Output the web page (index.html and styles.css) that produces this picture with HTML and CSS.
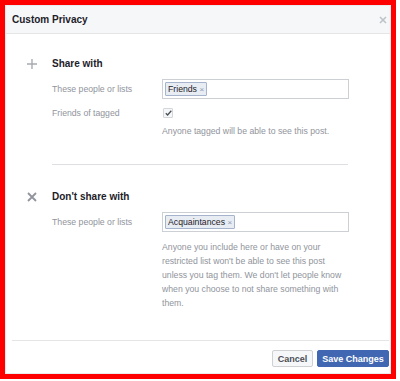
FILE: index.html
```html
<!DOCTYPE html>
<html lang="en">
<head>
    <meta charset="UTF-8">
    <meta name="viewport" content="width=device-width, initial-scale=1.0">
    <title>Custom Privacy</title>
    <link rel="stylesheet" href="styles.css">
</head>
<body>
    <div class="frame">
        <div class="dialog">
            <div class="dialog-header">
                <h1 class="dialog-title">Custom Privacy</h1>
                <svg class="dialog-close" width="8" height="8" viewBox="0 0 8 8">
                    <path d="M1 1 L7 7 M7 1 L1 7" stroke="#bec2c9" stroke-width="1.6" fill="none"/>
                </svg>
            </div>

            <div class="dialog-body">
                <div class="rule">
                    <div class="rule-head">
                        <svg class="rule-icon" width="10" height="10" viewBox="0 0 10 10">
                            <path d="M5 0 V10 M0 5 H10" stroke="#a7abb1" stroke-width="1.4" fill="none"/>
                        </svg>
                        <h2 class="rule-title">Share with</h2>
                    </div>
                    <div class="row">
                        <div class="row-label">These people or lists</div>
                        <div class="token-input">
                            <span class="token">Friends <span class="token-x">&times;</span></span>
                        </div>
                    </div>
                    <div class="row row-check">
                        <div class="row-label">Friends of tagged</div>
                        <span class="checkbox">
                            <svg width="7" height="6" viewBox="0 0 7 6">
                                <path d="M0.8 3.2 L2.6 5 L6.3 0.8" stroke="#4b4f56" stroke-width="1.3" fill="none"/>
                            </svg>
                        </span>
                    </div>
                    <p class="note">Anyone tagged will be able to see this post.</p>
                </div>

                <div class="divider"></div>

                <div class="rule rule-deny">
                    <div class="rule-head">
                        <svg class="rule-icon" width="10" height="10" viewBox="0 0 10 10">
                            <path d="M1 1 L9 9 M9 1 L1 9" stroke="#90949c" stroke-width="1.8" fill="none"/>
                        </svg>
                        <h2 class="rule-title">Don't share with</h2>
                    </div>
                    <div class="row">
                        <div class="row-label">These people or lists</div>
                        <div class="token-input">
                            <span class="token">Acquaintances <span class="token-x">&times;</span></span>
                        </div>
                    </div>
                    <p class="note note-long">Anyone you include here or have on your restricted list won't be able to see this post unless you tag them. We don't let people know when you choose to not share something with them.</p>
                </div>
            </div>

            <div class="dialog-footer">
                <button class="btn btn-cancel">Cancel</button>
                <button class="btn btn-save">Save Changes</button>
            </div>
        </div>
    </div>
</body>
</html>
```

FILE: styles.css
```css
* {
    margin: 0;
    padding: 0;
    box-sizing: border-box;
}

body {
    font-family: "Liberation Sans", Arial, sans-serif;
    background: #fff;
    color: #1d2129;
}

.frame {
    width: 396px;
    height: 379px;
    border: 5px solid #ff0000;
}

.dialog {
    display: flex;
    flex-direction: column;
    height: 100%;
    border: 1px solid #e9ebee;
    background: #fff;
}

.dialog-header {
    display: flex;
    justify-content: space-between;
    align-items: center;
    height: 28px;
    padding: 0 3px 0 6px;
    background: #f6f7f9;
    border-bottom: 1px solid #e5e5e5;
}

.dialog-title {
    font-size: 10px;
    font-weight: bold;
    color: #1d2129;
    line-height: 27px;
}

.dialog-close {
    display: block;
}

.dialog-body {
    flex: 1;
    padding-top: 23px;
}

.rule {
    padding-left: 21px;
}

.rule-head {
    display: flex;
    align-items: center;
    height: 14px;
}

.rule-icon {
    display: block;
    width: 10px;
    height: 10px;
    margin-right: 15px;
    flex: none;
}

.rule-title {
    font-size: 10px;
    font-weight: bold;
    color: #1d2129;
    line-height: 14px;
}

.row {
    display: flex;
    align-items: center;
    margin-top: 8px;
    padding-left: 25px;
}

.row-label {
    width: 110px;
    font-size: 8.7px;
    color: #90949c;
}

.token-input {
    display: flex;
    align-items: center;
    width: 187px;
    height: 20px;
    padding: 0 2px;
    border: 1px solid #ccd0d5;
    background: #fff;
}

.token {
    display: inline-flex;
    align-items: center;
    height: 14px;
    padding: 0 2px;
    border: 1px solid #a5b3cc;
    border-radius: 1px;
    background: #e8ecf3;
    font-size: 8.7px;
    color: #1d2129;
    white-space: pre;
}

.token-x {
    color: #8d9aaf;
    font-size: 8px;
}

.row-check {
    margin-top: 7px;
    height: 14px;
}

.checkbox {
    display: flex;
    align-items: center;
    justify-content: center;
    width: 10px;
    height: 10px;
    margin-left: 1px;
    border: 1px solid #d3d6db;
    border-radius: 1px;
    background: #f6f7f9;
}

.checkbox svg {
    display: block;
}

.note {
    margin-top: 4px;
    padding-left: 135px;
    font-size: 8.7px;
    line-height: 14px;
    color: #90949c;
}

.note-long {
    width: 322px;
    margin-top: 8px;
}

.divider {
    height: 1px;
    width: 296px;
    margin: 26px 0 0 46px;
    background: #dddfe2;
}

.rule-deny {
    margin-top: 25px;
}

.dialog-footer {
    display: flex;
    justify-content: flex-end;
    gap: 4px;
    margin: 0 1px 0 6px;
    padding: 9px 0 6px;
    border-top: 1px solid #e5e5e5;
}

.btn {
    height: 17px;
    padding: 0;
    border: 1px solid #ced0d4;
    border-radius: 2px;
    font-family: "Liberation Sans", Arial, sans-serif;
    font-size: 9px;
    font-weight: bold;
    white-space: nowrap;
    cursor: pointer;
}

.btn-cancel {
    width: 41px;
    background: #f6f7f9;
    color: #4b4f56;
}

.btn-save {
    width: 72px;
    background: #4267b2;
    border-color: #4267b2;
    color: #fff;
}
```
